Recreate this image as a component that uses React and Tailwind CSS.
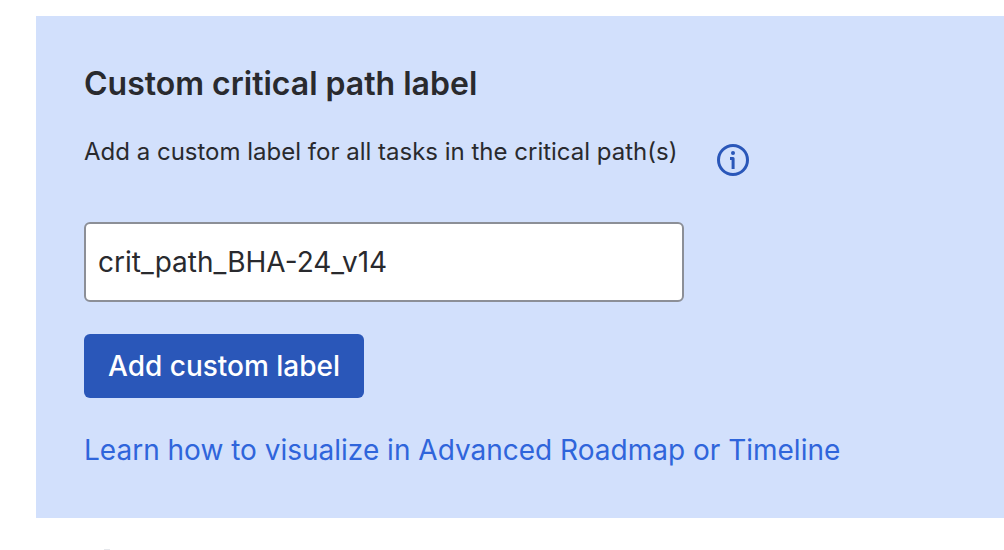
import React, { useState } from 'react';

const InfoIcon = () => (
  <svg width="32" height="32" viewBox="0 0 32 32" fill="none" aria-hidden="true">
    <circle cx="16" cy="16" r="14.5" stroke="#2a57b9" strokeWidth="3" />
    <circle cx="16" cy="9" r="2" fill="#2a57b9" />
    <path d="M13 14.5h3.1V25" stroke="#2a57b9" strokeWidth="3" strokeLinejoin="round" />
  </svg>
);

const App = () => {
  const [label, setLabel] = useState('crit_path_BHA-24_v14');

  return (
    <main className="bg-white pt-4 pl-9 font-['Inter',sans-serif] text-[#292a2e]">
      <section className="bg-[#d2e0fc] px-12 pt-12 pb-12">
        <h2 className="text-[32px] leading-10 font-semibold">Custom critical path label</h2>
        <div className="mt-8 flex items-start gap-10">
          <label htmlFor="custom-label" className="text-2xl leading-8">
            Add a custom label for all tasks in the critical path(s)
          </label>
          <button type="button" aria-label="More information" className="mt-2">
            <InfoIcon />
          </button>
        </div>
        <input
          id="custom-label"
          type="text"
          value={label}
          onChange={(e) => setLabel(e.target.value)}
          className="mt-[46px] block h-20 w-full max-w-[600px] rounded-md border-2 border-[#8c8f97] bg-white px-3 text-[28px] outline-none"
        />
        <button type="button" className="mt-8 block h-16 rounded-md bg-[#2a57b9] px-6 text-[28px] font-medium text-white">
          Add custom label
        </button>
        <a href="#timeline" className="mt-8 inline-block text-[28px] leading-10 text-[#2f65db]">
          Learn how to visualize in Advanced Roadmap or Timeline
        </a>
      </section>

      {/* Top edge of the next section */}
      <div className="px-[68px] pt-[31px]">
        <div className="h-px w-1.5 bg-gray-200" />
      </div>
    </main>
  );
};

export default App;
